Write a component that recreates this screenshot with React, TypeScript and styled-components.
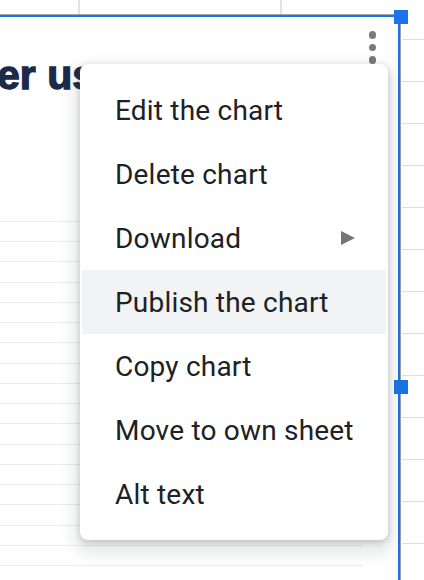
import React from "react";
import styled, { createGlobalStyle } from "styled-components";

const Global = createGlobalStyle`
  html, body { margin: 0; padding: 0; background: #ffffff; overflow: hidden; }
  #root { width: 424px; height: 580px; }
`;

const Page = styled.div`
  position: relative;
  width: 424px;
  height: 580px;
  overflow: hidden;
  display: grid;
  grid-template-columns: 400px 1fr;
  grid-template-rows: 15px 1fr;
  background: #fff;
`;

const TopRow = styled.div`
  display: flex;
  border-bottom: 1px solid #a8a8a8;
  box-sizing: border-box;
  margin-right: 6px;
`;

const TopCell = styled.div<{ $w: number }>`
  flex: 0 0 ${(p) => p.$w}px;
  box-sizing: border-box;
  border-right: 2px solid #e2e2e2;
`;

const Corner = styled.div``;

const Chart = styled.div`
  display: flex;
  flex-direction: column;
  border-top: 2px solid #1a73e8;
  border-right: 2px solid #1a73e8;
  min-height: 0;
  overflow: hidden;
`;

const Header = styled.div`
  flex: 0 0 204px;
  display: flex;
  justify-content: space-between;
  align-items: flex-start;
`;

const Title = styled.h1`
  margin: 34px 0 0 -3px;
  font-family: "Liberation Sans", Arial, sans-serif;
  font-weight: 700;
  font-size: 41px;
  line-height: 48px;
  color: #1b2a4a;
  -webkit-text-stroke: 1.3px #1b2a4a;
  white-space: nowrap;
`;

const Kebab = styled.div`
  display: flex;
  flex-direction: column;
  gap: 5px;
  margin: 14px 22px 0 0;
`;

const Dot = styled.span`
  width: 7.5px;
  height: 7.5px;
  border-radius: 50%;
  background: #7a7a7a;
`;

const Plot = styled.div`
  width: 363px;
  display: flex;
  flex-direction: column;
`;

const PlotLine = styled.div`
  flex: 0 0 20.24px;
  box-sizing: border-box;
  border-top: 1px solid #ededed;
`;

const RightColumn = styled.div`
  border-left: 1px solid #a0a0a0;
  display: flex;
  flex-direction: column;
  padding-left: 1px;
`;

const RightCell = styled.div<{ $first?: boolean }>`
  flex: 0 0 ${(p) => (p.$first ? 25 : 42)}px;
  box-sizing: border-box;
  border-bottom: 1px solid #dedede;
`;

const Handle = styled.div<{ $top: number }>`
  position: absolute;
  left: 394px;
  top: ${(p) => p.$top}px;
  width: 14px;
  height: 14px;
  background: #1a73e8;
`;

const Menu = styled.div`
  position: absolute;
  left: 80px;
  top: 64px;
  width: 308px;
  box-sizing: border-box;
  padding: 14px 2px;
  background: #fff;
  border-radius: 8px;
  box-shadow: 0 8px 16px 6px rgba(60, 64, 67, 0.12), 0 2px 6px rgba(60, 64, 67, 0.25);
  font-family: Roboto, "Liberation Sans", Arial, sans-serif;
`;

const Item = styled.div<{ $active?: boolean }>`
  height: 64px;
  display: flex;
  align-items: center;
  justify-content: space-between;
  padding: 0 31px 0 33px;
  background: ${(p) => (p.$active ? "#f1f3f4" : "transparent")};
  color: #202124;
  font-size: 28px;
  letter-spacing: 0.2px;
  white-space: nowrap;
`;

const Arrow = styled.span`
  width: 0;
  height: 0;
  border-top: 7px solid transparent;
  border-bottom: 7px solid transparent;
  border-left: 14px solid #757575;
`;

const items = [
  { label: "Edit the chart" },
  { label: "Delete chart" },
  { label: "Download", sub: true },
  { label: "Publish the chart", active: true },
  { label: "Copy chart" },
  { label: "Move to own sheet" },
  { label: "Alt text" },
];

export default function App() {
  return (
    <>
      <Global />
      <Page>
        <TopRow>
          <TopCell $w={80} />
          <TopCell $w={202} />
        </TopRow>
        <Corner />
        <Chart>
          <Header>
            <Title>er users</Title>
            <Kebab>
              <Dot />
              <Dot />
              <Dot />
            </Kebab>
          </Header>
          <Plot>
            {Array.from({ length: 18 }).map((_, i) => (
              <PlotLine key={i} />
            ))}
          </Plot>
        </Chart>
        <RightColumn>
          <RightCell $first />
          {Array.from({ length: 13 }).map((_, i) => (
            <RightCell key={i} />
          ))}
        </RightColumn>
        <Handle $top={10} />
        <Handle $top={380} />
        <Menu>
          {items.map((it) => (
            <Item key={it.label} $active={it.active}>
              <span>{it.label}</span>
              {it.sub && <Arrow />}
            </Item>
          ))}
        </Menu>
      </Page>
    </>
  );
}
